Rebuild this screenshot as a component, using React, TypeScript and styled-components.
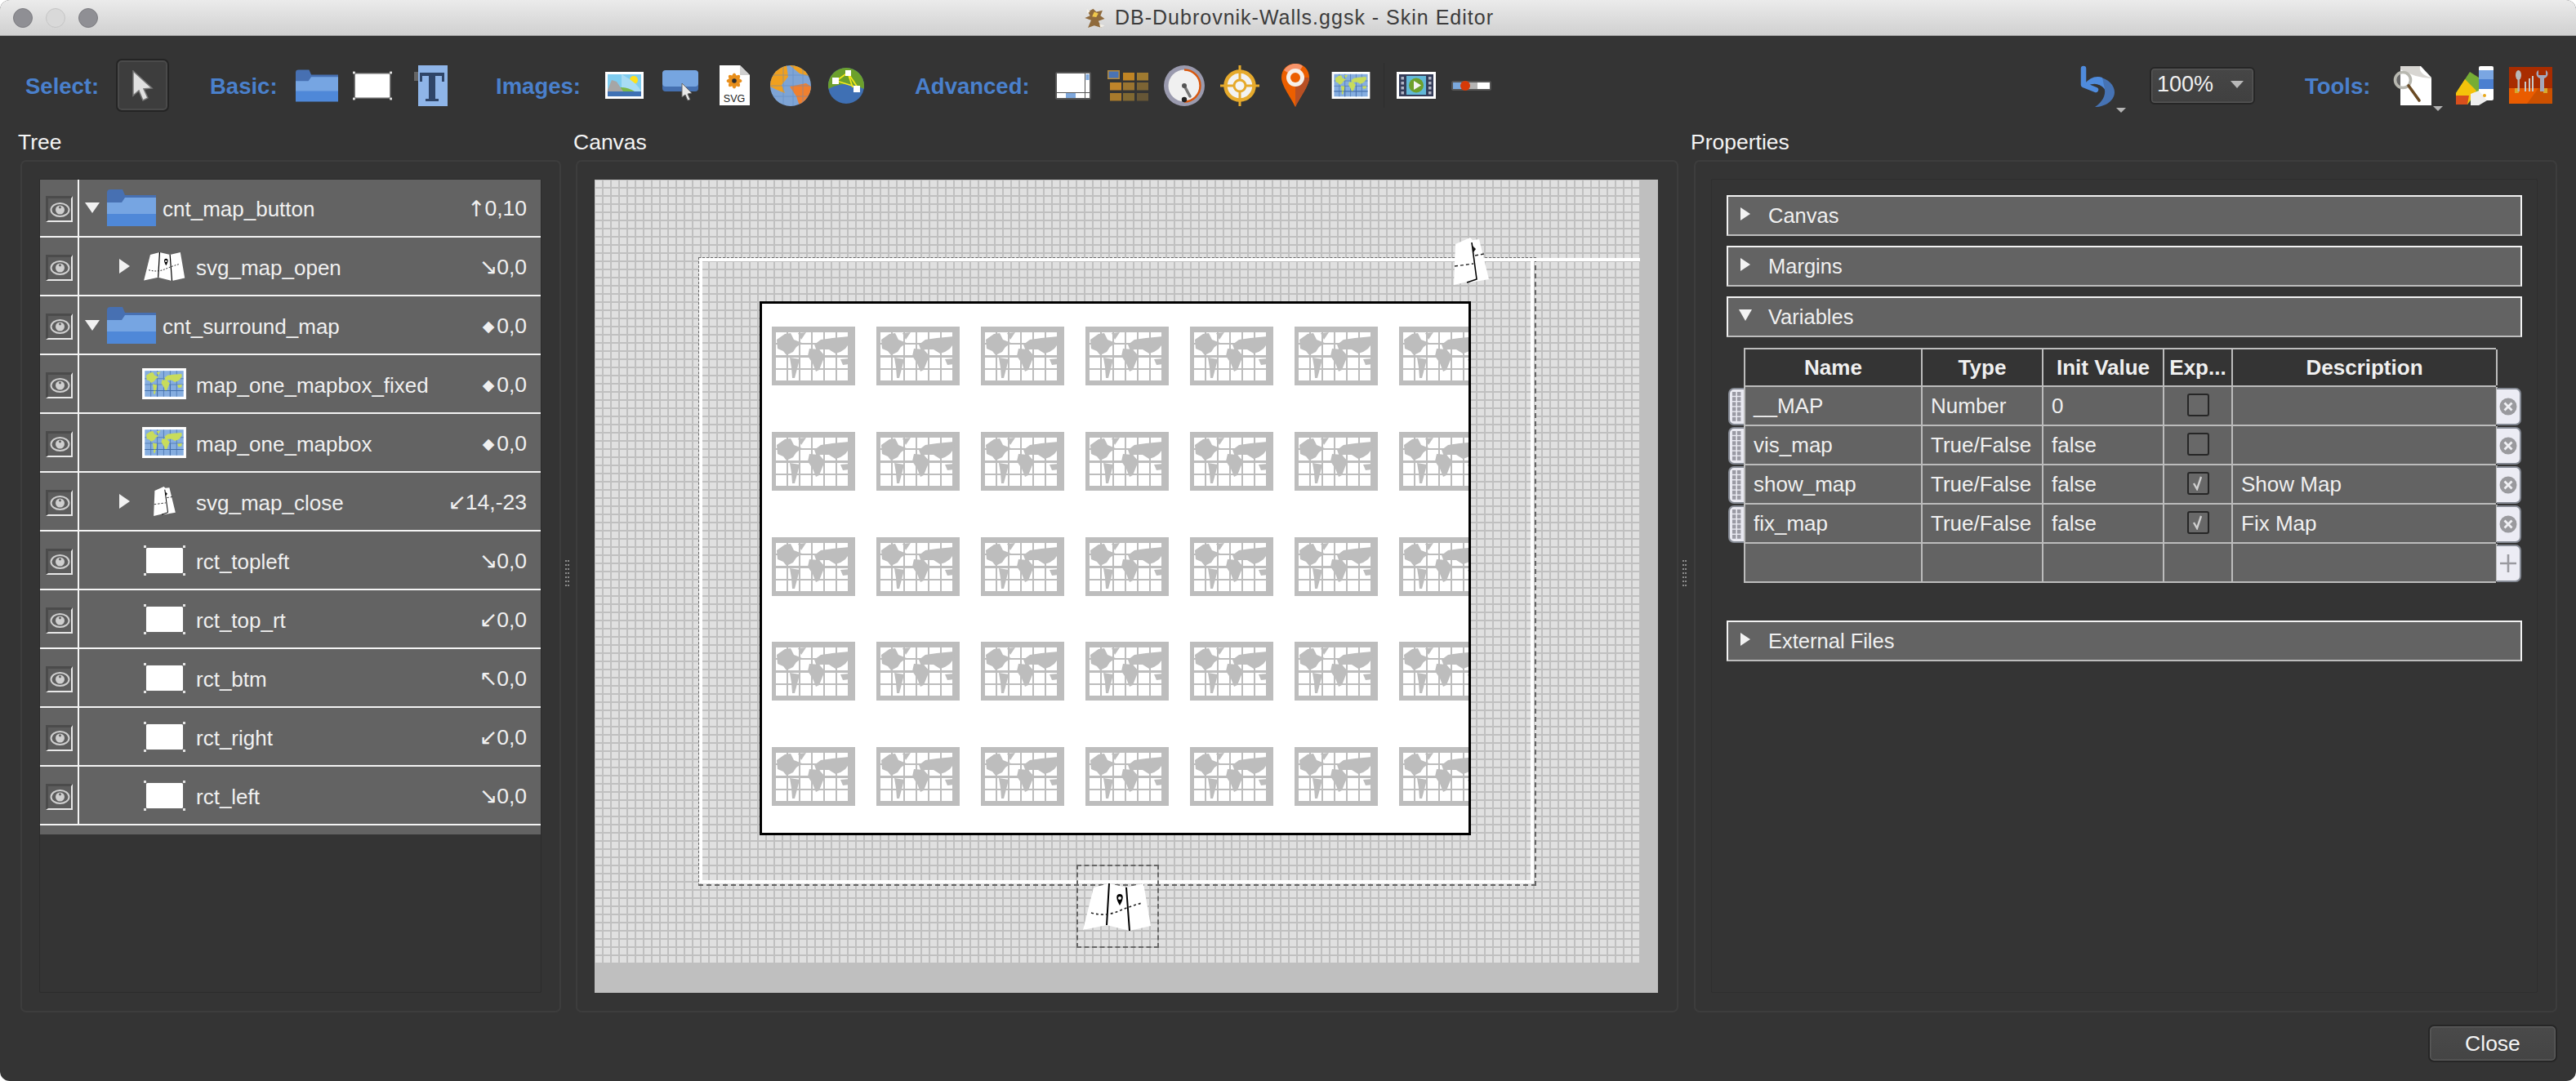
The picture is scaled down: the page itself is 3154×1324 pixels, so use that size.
import React from "react";
import styled, { createGlobalStyle } from "styled-components";

const GlobalStyle = createGlobalStyle`
  html, body { margin: 0; padding: 0; background: #ffffff; }
  * { box-sizing: border-box; }
`;

const FONT = `"Liberation Sans", Arial, sans-serif`;

const Window = styled.div`
  width: 3154px; height: 1324px; background: #343434; border-radius: 12px; overflow: hidden;
  display: flex; flex-direction: column; font-family: ${FONT}; color: #f2f2f2;
`;
const TitleBar = styled.div`
  height: 44px; flex: none; display: grid; grid-template-columns: 1fr auto 1fr; align-items: center;
  background: linear-gradient(#ebebeb, #d0d0d0); border-bottom: 1px solid #a8a8a8; padding-left: 16px;
`;
const Lights = styled.div`display: flex; gap: 16px;`;
const Light = styled.span<{ $dim?: boolean }>`
  width: 24px; height: 24px; border-radius: 50%;
  background: ${(p) => (p.$dim ? "#d9d9d9" : "#8f8f94")};
  border: 1px solid ${(p) => (p.$dim ? "#c4c4c4" : "#7c7c80")};
`;
const TitleText = styled.div`
  display: flex; align-items: center; gap: 10px; font-size: 25px; letter-spacing: 1px; color: #3c3c3c; margin-right: 14px;
`;
const Toolbar = styled.div`
  height: 116px; flex: none; display: flex; align-items: center; padding: 5px 29px 0 31px;
`;
const ToolLabel = styled.div<{ $ml?: number; $w: number }>`
  margin-left: ${(p) => p.$ml ?? 0}px; width: ${(p) => p.$w}px; flex: none; white-space: nowrap;
  font-size: 27.5px; font-weight: 700; color: #4a80cc; padding-top: 3px;
`;
const Slot = styled.div<{ $ml: number; $w: number; $h: number }>`
  position: relative; flex: none; display: flex;
  margin-left: ${(p) => p.$ml}px; width: ${(p) => p.$w}px; height: ${(p) => p.$h}px;
`;
const SelectButton = styled.div`
  margin-left: 17px; width: 65px; height: 65px; flex: none; display: flex; align-items: center; justify-content: center;
  background: #3d3d3d; border: 2px solid #242424; border-radius: 7px; box-shadow: inset 0 0 0 2px #4a4a4a;
`;
const ToolSep = styled.div`margin-left: 16px; width: 1px; height: 55px; flex: none; background: #2d2d2d;`;
const RightTools = styled.div`margin-left: auto; display: flex; align-items: center;`;
const Caret = styled.span`
  position: absolute; left: calc(100% + 2px); top: calc(100% + 1px); width: 0; height: 0;
  border-left: 6px solid transparent; border-right: 6px solid transparent; border-top: 6px solid #b4b4b4;
`;
const ZoomSelect = styled.div`
  margin-left: 43px; width: 129px; height: 46px; flex: none; display: flex; align-items: center; justify-content: space-between;
  padding: 0 12px 3px 7px; font-size: 27px; color: #f0f0f0; border: 2px solid #262626; border-radius: 6px;
  background: linear-gradient(#464646, #404040); box-shadow: inset 0 0 0 1.5px #555;
`;
const ZoomCaret = styled.span`
  width: 0; height: 0; border-left: 8px solid transparent; border-right: 8px solid transparent; border-top: 9px solid #b8b8b8;
`;

const Panels = styled.div`display: flex; flex: 1; min-height: 0; padding-left: 22px; height: 1080px;`;
const Column = styled.section<{ $w: number }>`
  width: ${(p) => p.$w}px; flex: none; display: flex; flex-direction: column;
`;
const PanelTitle = styled.div`height: 36px; flex: none; font-size: 26.5px; line-height: 28px; color: #f4f4f4;`;
const Frame = styled.div<{ $ml: number }>`
  flex: 1; margin-left: ${(p) => p.$ml}px; min-height: 0; display: flex; flex-direction: column;
  border: 2px solid #3d3d3d; border-radius: 7px; padding: 21px 22px 22px 21px;
`;
const Gutter = styled.div`width: 15px; flex: none; display: flex; align-items: center; justify-content: center;`;
const SplitDots = styled.div`
  width: 5px; height: 34px; margin-top: 6px;
  background-image: radial-gradient(circle at 1.2px 1.2px, #8a8a8a 1.2px, transparent 1.3px), radial-gradient(circle at 3.8px 1.2px, #8a8a8a 1.2px, transparent 1.3px);
  background-size: 5px 5px;
`;

/* Tree */
const TreeWell = styled.div`flex: 1; border: 1px solid #2b2b2b; border-radius: 2px; background: #343434;`;
const TreeList = styled.div`background: #636363; padding-bottom: 11px;`;
const Row = styled.div`
  height: 72px; display: flex; border-bottom: 2px solid #f4f4f4;
  &:first-child { height: 71px; }
`;
const EyeCell = styled.div`
  width: 48px; flex: none; display: flex; align-items: center; justify-content: flex-start; padding: 3px 0 0 7px;
  border-right: 2px solid #f4f4f4;
`;
const EyeBox = styled.div`
  width: 33px; height: 32px; display: flex; align-items: center; justify-content: center;
  background: #5c5c5c; border-top: 3px solid #4b4b4b; border-left: 3px solid #4b4b4b;
  border-right: 2px solid #e8e8e8; border-bottom: 2px solid #e8e8e8;
`;
const RowMain = styled.div<{ $indent: number }>`
  flex: 1; min-width: 0; display: flex; align-items: center; padding: 0 17px 0 ${(p) => p.$indent}px;
`;
const Toggle = styled.span<{ $open?: boolean; $none?: boolean }>`
  flex: none; width: 0; height: 0; visibility: ${(p) => (p.$none ? "hidden" : "visible")};
  ${(p) =>
    p.$open
      ? `border-left: 9px solid transparent; border-right: 9px solid transparent; border-top: 13px solid #f2f2f2;`
      : `border-top: 9px solid transparent; border-bottom: 9px solid transparent; border-left: 13px solid #f2f2f2;`}
`;
const RowIcon = styled.div<{ $ml: number; $w: number }>`
  flex: none; margin-left: ${(p) => p.$ml}px; width: ${(p) => p.$w}px; display: flex; justify-content: center;
`;
const RowName = styled.span<{ $ml: number }>`
  margin-left: ${(p) => p.$ml}px; font-size: 26px; color: #f0f0f0; white-space: nowrap; padding-top: 4px;
`;
const RowValue = styled.span`
  margin-left: auto; font-size: 26.5px; color: #f0f0f0; display: flex; align-items: center; white-space: nowrap; padding-top: 2px;
`;
const ValueMark = styled.span<{ $small?: boolean }>`
  font-family: "DejaVu Sans", sans-serif; font-weight: 400; font-size: ${(p) => (p.$small ? 19 : 27)}px; line-height: 30px;
  display: flex; justify-content: center; width: 18px; margin-right: 1px;
`;

/* Canvas */
const Stage = styled.div`
  flex: 1; background: #bfbfbf; width: 1302px; margin: 1px 0 0 0; overflow: hidden;
`;
const GridArea = styled.div`
  position: relative; width: 1280px; height: 960px; background-color: #e0e0e0;
  background-image: linear-gradient(to right, transparent 8px, #c0c0c0 8px), linear-gradient(to bottom, transparent 8px, #c0c0c0 8px);
  background-size: 10px 10px; background-position: 1px 1px;
`;
const SurroundFrame = styled.div`
  position: absolute; left: 127px; top: 95px; width: 1026px; height: 770px;
  border-style: dashed; border-color: #666; border-width: 1px 2px 2px 1px;
`;
const SurroundInner = styled.div`
  height: calc(100% - 1px); width: calc(100% - 1px); border: 4px solid #ffffff;
`;
const TopWire = styled.div`
  position: absolute; left: 1150px; top: 96px; width: 130px; height: 4px; background: #fff;
`;
const Page = styled.div`
  position: absolute; left: 202px; top: 149px; width: 871px; height: 654px; background: #fff;
  border: 3px solid #000; overflow: hidden; padding: 28px 0 0 12px;
`;
const TileGrid = styled.div`
  display: grid; grid-template-columns: repeat(7, 102px); column-gap: 26px; row-gap: 56.75px; width: 880px;
`;
const SelBox = styled.div`
  position: absolute; left: 590px; top: 839px; width: 101px; height: 102px; border: 2px dashed #666;
`;
const SelMap = styled.div`position: absolute; left: 6px; top: 21px; display: flex;`;
const CloseMap = styled.div`position: absolute; left: 1052px; top: 71px; display: flex;`;

/* Properties */
const PropsWell = styled.div`
  flex: 1; border: 1px solid #2e2e2e; border-radius: 2px; padding: 19px 18px; margin-left: -2px;
  display: flex; flex-direction: column;
`;
const SectionHead = styled.div<{ $mt?: number }>`
  height: 50px; flex: none; display: flex; align-items: center; gap: 22px; padding: 0 0 0 15px; margin-top: ${(p) => p.$mt ?? 0}px;
  background: #636363; border: 2px solid #f2f2f2; border-bottom-color: #bdbdbd; font-size: 25.5px; color: #f0f0f0;
`;
const SectionToggle = styled.span<{ $open?: boolean }>`
  flex: none; width: 12px; margin-top: -4px; height: 0;
  ${(p) =>
    p.$open
      ? `border-left: 8px solid transparent; border-right: 8px solid transparent; border-top: 14px solid #f2f2f2; width: 16px; margin-left: -2px; margin-right: -2px;`
      : `border-top: 8.5px solid transparent; border-bottom: 8.5px solid transparent; border-left: 12px solid #f2f2f2;`}
`;
const VarTable = styled.div`margin: 13px 0 0 2px; display: flex; flex-direction: column;`;
const VarRow = styled.div`display: flex; height: 48px;`;
const Cells = styled.div<{ $head?: boolean }>`
  width: 921px; flex: none; display: grid; grid-template-columns: 217px 148px 148px 84px 324px;
  background: ${(p) => (p.$head ? "#343434" : "#636363")};
  border-left: 2px solid #bcbcbc; border-bottom: 2px solid #bcbcbc;
  ${(p) => (p.$head ? "border-top: 2px solid #bcbcbc;" : "")}
`;
const Cell = styled.div<{ $head?: boolean; $center?: boolean }>`
  display: flex; align-items: center; overflow: hidden; white-space: nowrap; padding: 0 0 0 ${(p) => (p.$head || p.$center ? 0 : 10)}px;
  justify-content: ${(p) => (p.$head || p.$center ? "center" : "flex-start")};
  border-right: 2px solid #bcbcbc; font-size: 26px; color: #f0f0f0; font-weight: ${(p) => (p.$head ? 700 : 400)};
`;
const Handle = styled.div<{ $none?: boolean }>`
  width: 19px; flex: none; display: flex; align-items: center; justify-content: center; margin: 1px 0;
  ${(p) =>
    p.$none
      ? ""
      : `background: #e9e9f1; border: 2px solid #858a94; border-right: none; border-radius: 7px 0 0 7px;`}
`;
const EndCap = styled.div`
  width: 30px; flex: none; margin: 1px 0 1px 1px; display: flex; align-items: center; justify-content: center;
  background: #ececf4; border: 2px solid #858a94; border-left: none; border-radius: 0 7px 7px 0;
`;
const CheckBox = styled.div`
  width: 27px; height: 28px; display: flex; align-items: center; justify-content: center; margin: -3px 0 0 0;
  background: #686868; border: 2px solid #262626; border-radius: 3px;
`;
const Footer = styled.div`height: 84px; flex: none; display: flex; justify-content: flex-end; padding: 15px 23px 0 0;`;
const CloseButton = styled.div`
  width: 158px; height: 46px; display: flex; align-items: center; justify-content: center; font-size: 26.5px; color: #f4f4f4;
  background: linear-gradient(#4a4a4a, #444); border: 2px solid #262626; border-radius: 7px; box-shadow: inset 0 0 0 1.5px #5a5a5a;
`;

/* Icons */
const Folder = ({ w = 60, h = 45 }: { w?: number; h?: number }) => (
  <svg width={w} height={h} viewBox="0 0 60 45">
    <path d="M0 4 Q0 0 4 0 H19 L22 7 H60 V30 H0Z" fill="#4770b2" />
    <path d="M0 16 H18 L22 10 H60 V31 H0Z" fill="#76a5e2" />
    <rect y="30" width="60" height="15" fill="#4f88d8" />
  </svg>
);
const RectIcon = ({ w = 51, h = 37 }: { w?: number; h?: number }) => (
  <svg width={w} height={h} viewBox="0 0 51 37">
    <rect x="1.5" y="1.5" width="48" height="34" fill="#666" />
    <rect x="3" y="3" width="45" height="31" rx="1.5" fill="#fff" />
    {[[0, 0], [48, 0], [0, 34], [48, 34]].map(([x, y]) => (
      <rect key={`${x}-${y}`} x={x} y={y} width="3" height="3" fill="#e4e4e4" />
    ))}
  </svg>
);
const Eye = () => (
  <svg width="25" height="18" viewBox="0 0 25 18">
    <ellipse cx="12.5" cy="9" rx="11" ry="8" fill="none" stroke="#cfcfcf" strokeWidth="2" />
    <circle cx="12.5" cy="9" r="5.5" fill="#cfcfcf" />
    <circle cx="12.5" cy="6" r="1.4" fill="#5c5c5c" />
  </svg>
);
const WORLD = (
  <>
    <path d="M6 16 L16 9 L23 8 L27 16 L37 20 L30 25 L26 31 L18 35 L14 30 L7 27Z" />
    <path d="M32 8 L42 7 L36 16Z" />
    <path d="M52 22 L60 16 L74 14 L95 12 L96 19 L90 27 L84 31 L78 33 L70 28 L60 28 L55 30Z" />
    <path d="M46 27 L58 28 L65 36 L62 43 L58 53 L54 55 L50 45 L44 36Z" />
    <path d="M22 38 L34 40 L32 48 L28 63 L25 63 L24 50Z" />
    <path d="M84 40 L96 39 L95 46 L87 47Z" />
  </>
);
const CELLS = [5, 20, 35, 50, 65, 80].flatMap((x) => [7, 22, 38, 53].map((y) => [x, y]));
const Tile = () => (
  <svg width="102" height="72" viewBox="0 0 102 72">
    <rect width="102" height="72" fill="#bdbdbd" />
    {CELLS.map(([x, y]) => (
      <rect key={`${x}-${y}`} x={x} y={y} width="13" height="13" fill="#fff" />
    ))}
    <g fill="#bdbdbd">{WORLD}</g>
  </svg>
);
const MapThumb = ({ w = 54, h = 38 }: { w?: number; h?: number }) => (
  <svg width={w} height={h} viewBox="0 0 102 72">
    <rect width="102" height="72" fill="#fff" />
    <rect x="6" y="6" width="90" height="60" fill="#86aee0" />
    <g stroke="#3b66a4" strokeWidth="2" opacity=".6">
      <path d="M6 24 H96 M6 38 H96 M6 52 H96 M20 6 V66 M35 6 V66 M50 6 V66 M65 6 V66 M80 6 V66" />
    </g>
    <g transform="translate(4 2) scale(.92 .92)" fill="#c8dc5c">{WORLD}</g>
    <path d="M6 52 H96 M35 38 V66 M65 38 V66" stroke="#3b66a4" strokeWidth="2" opacity=".7" />
  </svg>
);
const MapOpen = ({ w = 84, h = 58 }: { w?: number; h?: number }) => (
  <svg width={w} height={h} viewBox="0 0 84 58">
    <path d="M13 5 L32 0 L53 5 L74 0 L83 52 L57 58 L29 51 L0 57Z" fill="#fff" />
    <path d="M32 0 L29 51 M53 5 L57 58" stroke="#000" strokeWidth="2" fill="none" />
    <path d="M45 13 C40 13 40 19 45 27 C50 19 50 13 45 13Z" fill="#000" />
    <circle cx="45" cy="18" r="2" fill="#fff" />
    <path d="M10 36 C24 40 36 38 48 32 C56 29 64 26 72 24" stroke="#222" strokeWidth="1.6" strokeDasharray="3 3" fill="none" />
  </svg>
);
const MapClosed = ({ w = 43, h = 58 }: { w?: number; h?: number }) => (
  <svg width={w} height={h} viewBox="0 0 43 58">
    <path d="M2 8 L20 0 L23 3 L31 2 L43 51 L20 55 L17 54 L0 58Z" fill="#fff" />
    <path d="M22 6 L28 51 L16 55" stroke="#000" strokeWidth="1.6" fill="none" />
    <path d="M23 10 L27 14 L24 18Z" fill="#111" />
    <path d="M1 35 L24 32 M26 22 L37 20" stroke="#222" strokeWidth="1.4" strokeDasharray="4 3" fill="none" />
  </svg>
);
const CursorIcon = () => (
  <svg width="30" height="38" viewBox="0 0 30 38">
    <path d="M3 1 L3 31 L10 25 L15 37 L21 34 L16 23 L26 22Z" fill="#e0e0e0" stroke="#777" strokeWidth="1.5" />
  </svg>
);
const TextIcon = () => (
  <svg width="41" height="50" viewBox="0 0 41 50">
    <rect x="0" y="8" width="7" height="11" fill="#666" />
    <rect x="5" width="36" height="50" fill="#8fb5e8" />
    <path d="M7 9 H37 V20 H34 V13 H26 V41 H30 V44 H14 V41 H18 V13 H10 V20 H7Z" fill="#2f4568" />
  </svg>
);
const PicIcon = () => (
  <svg width="47" height="33" viewBox="0 0 47 33">
    <rect width="47" height="33" fill="#fff" />
    <rect x="3" y="3" width="41" height="27" fill="#7fcdf0" />
    <circle cx="35" cy="10" r="5" fill="#ffe11a" />
    <path d="M20 3 Q40 14 44 24 V27 H20Z" fill="#a8dcf4" />
    <path d="M3 24 Q20 14 36 24 V25 H3Z" fill="#7cb84a" />
    <path d="M3 22 L8 10 L14 12 L22 24 H3Z" fill="#a6a6a6" />
    <rect x="3" y="24" width="41" height="6" fill="#3f71b4" />
  </svg>
);
const BtnIcon = () => (
  <svg width="45" height="38" viewBox="0 0 45 38">
    <rect x="0" y="1" width="44" height="25" rx="4" fill="#4570b0" />
    <rect x="0" y="0" width="44" height="20" rx="4" fill="#76a5e0" />
    <path d="M24 16 L24 33 L28 30 L31 37 L34 36 L31 29 L36 28Z" fill="#e8e8e8" stroke="#666" strokeWidth="1" />
  </svg>
);
const SvgIcon = () => (
  <svg width="37" height="49" viewBox="0 0 37 49">
    <path d="M0 0 H25 L37 12 V49 H0Z" fill="#fff" />
    <path d="M25 0 L37 12 H25Z" fill="#cfcfcf" />
    <g fill="#e88f1c">
      {[0, 45, 90, 135].map((r) => (
        <ellipse key={r} cx="18" cy="19" rx="3.6" ry="9.5" transform={`rotate(${r} 18 19)`} />
      ))}
    </g>
    <circle cx="18" cy="19" r="2.8" fill="#2d2d2d" />
    <text x="18" y="45" fontSize="12.5" fontFamily={FONT} fill="#222" textAnchor="middle">SVG</text>
  </svg>
);
const GlobeIcon = () => (
  <svg width="50" height="50" viewBox="0 0 50 50">
    <defs><clipPath id="g1"><circle cx="25" cy="25" r="25" /></clipPath></defs>
    <g clipPath="url(#g1)">
      <rect width="50" height="50" fill="#7fa5d6" />
      <path d="M0 0 H20 L22 14 L14 24 L18 34 L8 30 L0 26Z" fill="#f0a020" />
      <path d="M24 0 H50 V14 L36 10Z" fill="#f0a020" />
      <path d="M24 26 L44 22 L50 26 V44 L36 50 L32 38Z" fill="#f08030" />
      <path d="M16 0 V50 M28 0 V50 M40 0 V50 M0 12 H50 M0 25 H50 M0 38 H50" stroke="#5f88c0" strokeWidth="1" opacity=".55" />
    </g>
  </svg>
);
const Globe2Icon = () => (
  <svg width="44" height="44" viewBox="0 0 44 44">
    <defs><clipPath id="g2"><circle cx="22" cy="22" r="22" /></clipPath></defs>
    <g clipPath="url(#g2)">
      <rect width="44" height="44" fill="#3f70b4" />
      <path d="M0 0 H44 V26 Q22 14 0 26Z" fill="#6ca02c" />
      <path d="M10 16 L24 6 L36 24 M24 6 L30 24 M10 16 L36 24" stroke="#f4e81c" strokeWidth="1.8" fill="none" />
      <rect x="5" y="12" width="8" height="8" fill="#fff" />
      <rect x="21" y="3" width="7" height="7" fill="#fff" />
      <rect x="31" y="22" width="8" height="8" fill="#fff" />
    </g>
  </svg>
);
const LayoutIcon = () => (
  <svg width="44" height="34" viewBox="0 0 44 34">
    <rect width="44" height="34" rx="2.5" fill="#555" />
    <rect x="2" y="2" width="34" height="23" fill="#fff" />
    <rect x="37" y="2" width="5" height="23" fill="#fff" />
    <rect x="37.5" y="3" width="4" height="7" fill="#7fa8dc" />
    <rect x="2" y="26" width="34" height="6" fill="#fff" />
    <rect x="37" y="26" width="5" height="6" fill="#fff" />
    <rect x="13" y="26" width="12" height="6" fill="#7fa8dc" />
  </svg>
);
const GridIcon = () => {
  const rows = [
    [[19, 3, "#bf8424"], [36, 3, "#9f7a30"]],
    [[3, 15, "#c0842a"], [19, 15, "#9a7430"], [36, 15, "#7c6434"]],
    [[3, 28, "#a87a2c"], [19, 28, "#806832"], [36, 28, "#665636"]],
  ] as [number, number, string][][];
  return (
    <svg width="50" height="38" viewBox="0 0 50 38">
      <rect x="0" y="0" width="15" height="11" fill="#b58a3c" />
      <rect x="1.5" y="1.5" width="12" height="8" fill="#4a73b4" />
      {rows.flat().map(([x, y, c]) => (
        <rect key={`${x}-${y}`} x={x} y={y} width="14" height="9.5" fill={c} />
      ))}
    </svg>
  );
};
const GaugeIcon = () => (
  <svg width="50" height="50" viewBox="0 0 50 50">
    <circle cx="25" cy="25" r="25" fill="#9a9aae" />
    <circle cx="25" cy="25" r="19.5" fill="#f0f0f0" />
    <path d="M25 5.5 A19.5 19.5 0 0 1 25 44.5" fill="none" stroke="#d8560c" strokeWidth="2.4" />
    <path d="M25 25 L32 38" stroke="#777" strokeWidth="3.5" strokeLinecap="round" />
    <circle cx="25" cy="25" r="3" fill="#555" />
    <circle cx="25" cy="42" r="3.2" fill="#222" />
  </svg>
);
const CrossIcon = () => (
  <svg width="48" height="50" viewBox="0 0 48 50">
    <circle cx="24" cy="25" r="17.5" fill="#f2f2f2" stroke="#e6aa2c" strokeWidth="4.5" />
    <path d="M24 0 V50 M0 25 H48" stroke="#e6aa2c" strokeWidth="3" />
    <circle cx="24" cy="25" r="7" fill="#f4f4f4" stroke="#e6aa2c" strokeWidth="3" />
  </svg>
);
const PinIcon = () => (
  <svg width="34" height="53" viewBox="0 0 34 53">
    <path d="M17 0 C7 0 0 7 0 17 C0 27 12 42 17 53 C22 42 34 27 34 17 C34 7 27 0 17 0Z" fill="#ec5f00" />
    <path d="M17 17 L34 17 C34 27 22 42 17 53Z" fill="#b85024" />
    <path d="M3 8 C7 2 12 0 17 0 C22 0 24 1 26 3 L17 17Z" fill="#f8946a" />
    <circle cx="17" cy="17" r="11" fill="#f6f0ea" />
    <circle cx="17" cy="17" r="6" fill="#ec5f00" />
  </svg>
);
const VideoIcon = () => (
  <svg width="48" height="33" viewBox="0 0 48 33">
    <rect width="48" height="33" fill="#fff" />
    <rect x="3" y="3" width="42" height="27" fill="#343c58" />
    <rect x="12" y="5" width="24" height="23" fill="#62b8d8" />
    <circle cx="24" cy="16.5" r="9" fill="#6ea02c" />
    <path d="M21 11 L30 16.5 L21 22Z" fill="#f4f4f4" />
    {[6, 12, 18, 24].map((y) => (
      <g key={y} fill="#b0b4c4">
        <rect x="5.5" y={y} width="3.5" height="3.5" /><rect x="39" y={y} width="3.5" height="3.5" />
      </g>
    ))}
  </svg>
);
const SliderIcon = () => (
  <svg width="49" height="14" viewBox="0 0 49 14">
    <rect y="1" width="49" height="12" rx="2.5" fill="#555" />
    <rect x="2" y="3" width="16" height="8" fill="#7ba8dc" />
    <rect x="18" y="3" width="14" height="8" fill="#b4b4b4" />
    <rect x="32" y="3" width="15" height="8" fill="#fff" />
    <circle cx="17" cy="7" r="6" fill="#d63a08" />
  </svg>
);
const UndoIcon = () => (
  <svg width="45" height="52" viewBox="0 0 45 52">
    <path d="M24 15 C38 17 45 26 45 34 C45 44 34 52 21 52 C30 46 34 38 33 31 C32 26 24 24 24 24Z" fill="#4673b4" />
    <path d="M7 5 V25 L22 31" fill="none" stroke="#4f8bdc" strokeWidth="6.5" strokeLinecap="round" strokeLinejoin="round" />
    <path d="M8 24 Q18 12 30 16 L33 30 Q24 20 12 26Z" fill="#4f8bdc" />
  </svg>
);
const DocSearchIcon = () => (
  <svg width="47" height="48" viewBox="0 0 47 48">
    <path d="M9 0 H34 L47 14 V48 H9Z" fill="#fff" />
    <path d="M9 0 H33 Q31 10 47 14 V15 Q26 14 9 4Z" fill="#d8d6d2" />
    <circle cx="12" cy="17" r="9.5" fill="#fff" fillOpacity=".25" stroke="#b8b8b0" strokeWidth="3.6" />
    <path d="M19 24 L32 42" stroke="#6a4a24" strokeWidth="3.6" strokeLinecap="round" />
  </svg>
);
const SwatchIcon = () => (
  <svg width="46" height="48" viewBox="0 0 46 48">
    <path d="M0 33 L17 7 L28 14 L28 30 L14 47 H0Z" fill="#76ad34" />
    <path d="M0 33 L11 16 L25 30 L14 47 H0Z" fill="#f5c30a" />
    <path d="M0 36 H16 L14 47 H0Z" fill="#d84f1c" />
    <rect x="28" y="0" width="18" height="42" rx="2" fill="#fff" />
    <rect x="28" y="5" width="18" height="11" fill="#7aa6e2" />
    <rect x="28" y="16" width="18" height="12" fill="#4b7fd0" />
    <path d="M18 34 L28 30 L38 42 L28 48 H18Z" fill="#eee" />
    <circle cx="35" cy="36" r="2" fill="#e8a81c" />
  </svg>
);
const ToolboxIcon = () => (
  <svg width="53" height="45" viewBox="0 0 53 45">
    <rect width="53" height="30" fill="#a82c00" />
    <rect y="26" width="53" height="19" fill="#ea5c00" />
    <path d="M22 45 L36 26 H53 V45Z" fill="#cc5000" />
    <rect x="7" y="26" width="5" height="6" fill="#d8a82c" />
    <rect x="42" y="26" width="5" height="6" fill="#d8a82c" />
    <ellipse cx="11.5" cy="10" rx="3.5" ry="6" fill="#b8b8b8" />
    <rect x="10.5" y="14" width="2.4" height="16" fill="#b8b8b8" />
    <rect x="19" y="18" width="2" height="12" fill="#c8c8c8" />
    <rect x="24" y="14" width="2" height="16" fill="#c8c8c8" />
    <rect x="28" y="11" width="2" height="19" fill="#c8c8c8" />
    <path d="M36 4 C32 6 33 13 38 14 V30 H43 V14 C48 13 49 6 45 4 V10 H36Z" fill="#a4a8bc" />
  </svg>
);
const AppIcon = () => (
  <svg width="28" height="26" viewBox="0 0 22 28" preserveAspectRatio="none">
    <path d="M4 6 L9 2 L12 6 L18 4 L16 11 L20 15 L14 18 L17 27 L10 24 L4 27 L7 17 L1 14 L6 11Z" fill="#8f6a3c" />
    <path d="M10 6 L14 8 L12 13 L8 12Z" fill="#f0c84c" />
    <path d="M3 2 L6 6 L3 8Z M15 22 L20 24 L16 27Z" fill="#f4f0e8" />
  </svg>
);
const DragDots = () => (
  <svg width="11" height="36" viewBox="0 0 11 36">
    {[0, 6].flatMap((x) =>
      [0, 6.2, 12.4, 18.6, 24.8, 31].map((y) => <rect key={`${x}-${y}`} x={x} y={y} width="4.4" height="4.8" fill="#9a9aa4" />)
    )}
  </svg>
);
const RemoveIcon = () => (
  <svg width="22" height="22" viewBox="0 0 22 22">
    <circle cx="11" cy="11" r="10.5" fill="#9a9a9e" />
    <path d="M6.5 6.5 L15.5 15.5 M15.5 6.5 L6.5 15.5" stroke="#f0f0f4" strokeWidth="2.8" />
  </svg>
);
const PlusIcon = () => (
  <svg width="22" height="24" viewBox="0 0 22 24">
    <path d="M11 1 V23 M1 12 H21" stroke="#9a9aa0" strokeWidth="2.6" />
  </svg>
);
const CheckMark = () => (
  <svg width="16" height="18" viewBox="0 0 16 18">
    <path d="M3 9 L7 16 L12 1" fill="none" stroke="#cfcfcf" strokeWidth="2.4" />
  </svg>
);

type TreeItem = { name: string; mark: string; value: string; kind: "folder" | "open" | "closed" | "map" | "rect" };
const TREE: TreeItem[] = [
  { name: "cnt_map_button", mark: "↑", value: "0,10", kind: "folder" },
  { name: "svg_map_open", mark: "↘", value: "0,0", kind: "open" },
  { name: "cnt_surround_map", mark: "◆", value: "0,0", kind: "folder" },
  { name: "map_one_mapbox_fixed", mark: "◆", value: "0,0", kind: "map" },
  { name: "map_one_mapbox", mark: "◆", value: "0,0", kind: "map" },
  { name: "svg_map_close", mark: "↙", value: "14,-23", kind: "closed" },
  { name: "rct_topleft", mark: "↘", value: "0,0", kind: "rect" },
  { name: "rct_top_rt", mark: "↙", value: "0,0", kind: "rect" },
  { name: "rct_btm", mark: "↖", value: "0,0", kind: "rect" },
  { name: "rct_right", mark: "↙", value: "0,0", kind: "rect" },
  { name: "rct_left", mark: "↘", value: "0,0", kind: "rect" },
];

const TreeRow = ({ item }: { item: TreeItem }) => {
  const folder = item.kind === "folder";
  const expandable = item.kind === "open" || item.kind === "closed";
  return (
    <Row>
      <EyeCell>
        <EyeBox><Eye /></EyeBox>
      </EyeCell>
      <RowMain $indent={folder ? 7 : 49}>
        <Toggle $open={folder} $none={!folder && !expandable} />
        <RowIcon $ml={folder ? 9 : 15} $w={folder ? 60 : 54}>
          {folder && <Folder />}
          {item.kind === "open" && <MapOpen w={51} h={35} />}
          {item.kind === "closed" && <MapClosed w={27} h={36} />}
          {item.kind === "map" && <MapThumb />}
          {item.kind === "rect" && <RectIcon w={51} h={37} />}
        </RowIcon>
        <RowName $ml={folder ? 8 : 12}>{item.name}</RowName>
        <RowValue>
          <ValueMark $small={item.mark === "◆"}>{item.mark}</ValueMark>
          {item.value}
        </RowValue>
      </RowMain>
    </Row>
  );
};

const VARS = [
  { name: "__MAP", type: "Number", init: "0", on: false, desc: "" },
  { name: "vis_map", type: "True/False", init: "false", on: false, desc: "" },
  { name: "show_map", type: "True/False", init: "false", on: true, desc: "Show Map" },
  { name: "fix_map", type: "True/False", init: "false", on: true, desc: "Fix Map" },
];

export default function App() {
  return (
    <Window>
      <GlobalStyle />
      <TitleBar>
        <Lights>
          <Light />
          <Light $dim />
          <Light />
        </Lights>
        <TitleText>
          <AppIcon />
          DB-Dubrovnik-Walls.ggsk - Skin Editor
        </TitleText>
        <span />
      </TitleBar>

      <Toolbar>
        <ToolLabel $w={94}>Select:</ToolLabel>
        <SelectButton><CursorIcon /></SelectButton>
        <ToolLabel $ml={50} $w={83}>Basic:</ToolLabel>
        <Slot $ml={22} $w={52} $h={40}><Folder w={52} h={40} /></Slot>
        <Slot $ml={18} $w={48} $h={36}><RectIcon w={48} h={36} /></Slot>
        <Slot $ml={27} $w={41} $h={50}><TextIcon /></Slot>
        <ToolLabel $ml={59} $w={108}>Images:</ToolLabel>
        <Slot $ml={26} $w={47} $h={33}><PicIcon /></Slot>
        <Slot $ml={23} $w={45} $h={38}><BtnIcon /></Slot>
        <Slot $ml={25} $w={37} $h={49}><SvgIcon /></Slot>
        <Slot $ml={25} $w={50} $h={50}><GlobeIcon /></Slot>
        <Slot $ml={21} $w={44} $h={44}><Globe2Icon /></Slot>
        <ToolLabel $ml={62} $w={145}>Advanced:</ToolLabel>
        <Slot $ml={27} $w={44} $h={34}><LayoutIcon /></Slot>
        <Slot $ml={20} $w={50} $h={38}><GridIcon /></Slot>
        <Slot $ml={19} $w={50} $h={50}><GaugeIcon /></Slot>
        <Slot $ml={19} $w={48} $h={50}><CrossIcon /></Slot>
        <Slot $ml={27} $w={34} $h={53}><PinIcon /></Slot>
        <Slot $ml={27} $w={48} $h={33}><MapThumb w={48} h={33} /></Slot>
        <ToolSep />
        <Slot $ml={15} $w={48} $h={33}><VideoIcon /></Slot>
        <Slot $ml={19} $w={49} $h={14}><SliderIcon /></Slot>
        <RightTools>
          <Slot $ml={0} $w={45} $h={52}><UndoIcon /><Caret /></Slot>
          <ZoomSelect>100%<ZoomCaret /></ZoomSelect>
          <ToolLabel $ml={61} $w={108}>Tools:</ToolLabel>
          <Slot $ml={0} $w={47} $h={48}><DocSearchIcon /><Caret /></Slot>
          <Slot $ml={30} $w={46} $h={48}><SwatchIcon /></Slot>
          <Slot $ml={19} $w={53} $h={45}><ToolboxIcon /></Slot>
        </RightTools>
      </Toolbar>

      <Panels>
        <Column $w={665}>
          <PanelTitle>Tree</PanelTitle>
          <Frame $ml={3}>
            <TreeWell>
              <TreeList>
                {TREE.map((t) => <TreeRow key={t.name} item={t} />)}
              </TreeList>
            </TreeWell>
          </Frame>
        </Column>
        <Gutter><SplitDots /></Gutter>
        <Column $w={1353}>
          <PanelTitle>Canvas</PanelTitle>
          <Frame $ml={3}>
            <Stage>
              <GridArea>
                <SurroundFrame><SurroundInner /></SurroundFrame>
                <TopWire />
                <Page>
                  <TileGrid>
                    {Array.from({ length: 35 }, (_, i) => <Tile key={i} />)}
                  </TileGrid>
                </Page>
                <SelBox>
                  <SelMap><MapOpen /></SelMap>
                </SelBox>
                <CloseMap><MapClosed /></CloseMap>
              </GridArea>
            </Stage>
          </Frame>
        </Column>
        <Gutter><SplitDots /></Gutter>
        <Column $w={1061}>
          <PanelTitle>Properties</PanelTitle>
          <Frame $ml={4}>
            <PropsWell>
              <SectionHead><SectionToggle />Canvas</SectionHead>
              <SectionHead $mt={12}><SectionToggle />Margins</SectionHead>
              <SectionHead $mt={12}><SectionToggle $open />Variables</SectionHead>
              <VarTable>
                <VarRow>
                  <Handle $none />
                  <Cells $head>
                    <Cell $head>Name</Cell>
                    <Cell $head>Type</Cell>
                    <Cell $head>Init Value</Cell>
                    <Cell $head>Exp...</Cell>
                    <Cell $head>Description</Cell>
                  </Cells>
                </VarRow>
                {VARS.map((v) => (
                  <VarRow key={v.name}>
                    <Handle><DragDots /></Handle>
                    <Cells>
                      <Cell>{v.name}</Cell>
                      <Cell>{v.type}</Cell>
                      <Cell>{v.init}</Cell>
                      <Cell $center>
                        <CheckBox>{v.on && <CheckMark />}</CheckBox>
                      </Cell>
                      <Cell>{v.desc}</Cell>
                    </Cells>
                    <EndCap><RemoveIcon /></EndCap>
                  </VarRow>
                ))}
                <VarRow>
                  <Handle $none />
                  <Cells>
                    <Cell /><Cell /><Cell /><Cell /><Cell />
                  </Cells>
                  <EndCap><PlusIcon /></EndCap>
                </VarRow>
              </VarTable>
              <SectionHead $mt={46}><SectionToggle />External Files</SectionHead>
            </PropsWell>
          </Frame>
        </Column>
      </Panels>

      <Footer>
        <CloseButton>Close</CloseButton>
      </Footer>
    </Window>
  );
}
